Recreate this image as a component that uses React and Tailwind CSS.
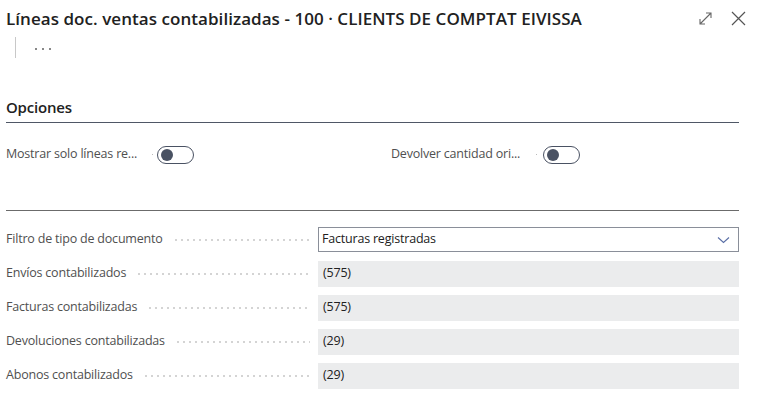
import React from "react";

const font = { fontFamily: '"Open Sans", "Noto Sans", sans-serif' };

function Toggle() {
  return (
    <div className="flex h-[18px] w-[37px] items-center rounded-full border border-[#4a5263] bg-white px-[3px]">
      <div className="h-[12px] w-[12px] rounded-full bg-[#4a5263]" />
    </div>
  );
}

function Leader() {
  return (
    <div className="ml-[10px] mr-[8px] h-[2px] flex-1 bg-[radial-gradient(circle,#d4d4d4_0.8px,transparent_1px)] bg-[length:6px_2px]" />
  );
}

function Field({ label, value, select }) {
  return (
    <div className="flex h-[26px] items-center">
      <div className="flex w-[312px] items-center">
        <span className="whitespace-nowrap text-[12.5px] tracking-[-0.2px] text-[#505050]">{label}</span>
        <Leader />
      </div>
      {select ? (
        <div className="flex h-[25px] flex-1 items-center justify-between border border-[#8a8f99] bg-white pl-[3px] pr-2">
          <span className="text-[12.5px] tracking-[-0.2px] text-[#212121]">{value}</span>
          <svg width="13" height="8" viewBox="0 0 13 8" fill="none" stroke="#5a6fa6" strokeWidth="1.1">
            <path d="M1 1.5l5.5 5 5.5-5" />
          </svg>
        </div>
      ) : (
        <div className="flex h-[26px] flex-1 items-center bg-[#ebeced] pl-[5px]">
          <span className="text-[12.5px] tracking-[-0.2px] text-[#212121]">{value}</span>
        </div>
      )}
    </div>
  );
}

export default function App() {
  return (
    <div className="h-[406px] w-[758px] overflow-hidden bg-white pl-[6px] pr-[19px]" style={font}>
      <div className="flex h-[37px] items-center justify-between">
        <h1 className="whitespace-nowrap text-[17px] font-semibold tracking-[0.05px] text-[#212121]">
          Líneas doc. ventas contabilizadas - 100 · CLIENTS DE COMPTAT EIVISSA
        </h1>
        <div className="-mr-[7px] flex items-center gap-[19px]">
          <svg width="13" height="13" viewBox="0 0 13 13" fill="none" stroke="#666" strokeWidth="1.1">
            <path d="M1 12L12 1M7 1h5v5M1 7v5h5" />
          </svg>
          <svg width="15" height="15" viewBox="0 0 15 15" fill="none" stroke="#555" strokeWidth="1.2">
            <path d="M1 1l13 13M14 1L1 14" />
          </svg>
        </div>
      </div>
      <div className="flex h-[21px] items-center">
        <div className="ml-[9px] h-[21px] w-px bg-[#c8c8c8]" />
        <div className="ml-[19px] mt-[2px] flex gap-[5px]">
          <span className="h-[2px] w-[2px] bg-[#888]" />
          <span className="h-[2px] w-[2px] bg-[#888]" />
          <span className="h-[2px] w-[2px] bg-[#888]" />
        </div>
      </div>

      <div className="mt-[38px] border-b border-[#4f5766] pb-[3px]">
        <h2 className="text-[15px] font-semibold tracking-[-0.2px] text-[#212121]">Opciones</h2>
      </div>

      <div className="mt-[23px] flex h-[18px] items-center">
        <div className="flex w-[385px] items-center">
          <span className="whitespace-nowrap text-[12.5px] tracking-[-0.2px] text-[#505050]">Mostrar solo líneas re...</span>
          <span className="ml-[15px] mr-[4px] h-[1px] w-[1px] bg-[#bbb]" />
          <Toggle />
        </div>
        <div className="flex items-center">
          <span className="whitespace-nowrap text-[12.5px] tracking-[-0.2px] text-[#505050]">Devolver cantidad ori...</span>
          <span className="ml-[16px] mr-[6px] h-[1px] w-[1px] bg-[#bbb]" />
          <Toggle />
        </div>
      </div>

      <div className="mt-[46px] border-b border-[#6b6b6b]" />

      <div className="mt-[16px] flex flex-col gap-[8px]">
        <Field label="Filtro de tipo de documento" value="Facturas registradas" select />
        <Field label="Envíos contabilizados" value="(575)" />
        <Field label="Facturas contabilizadas" value="(575)" />
        <Field label="Devoluciones contabilizadas" value="(29)" />
        <Field label="Abonos contabilizados" value="(29)" />
      </div>
    </div>
  );
}
